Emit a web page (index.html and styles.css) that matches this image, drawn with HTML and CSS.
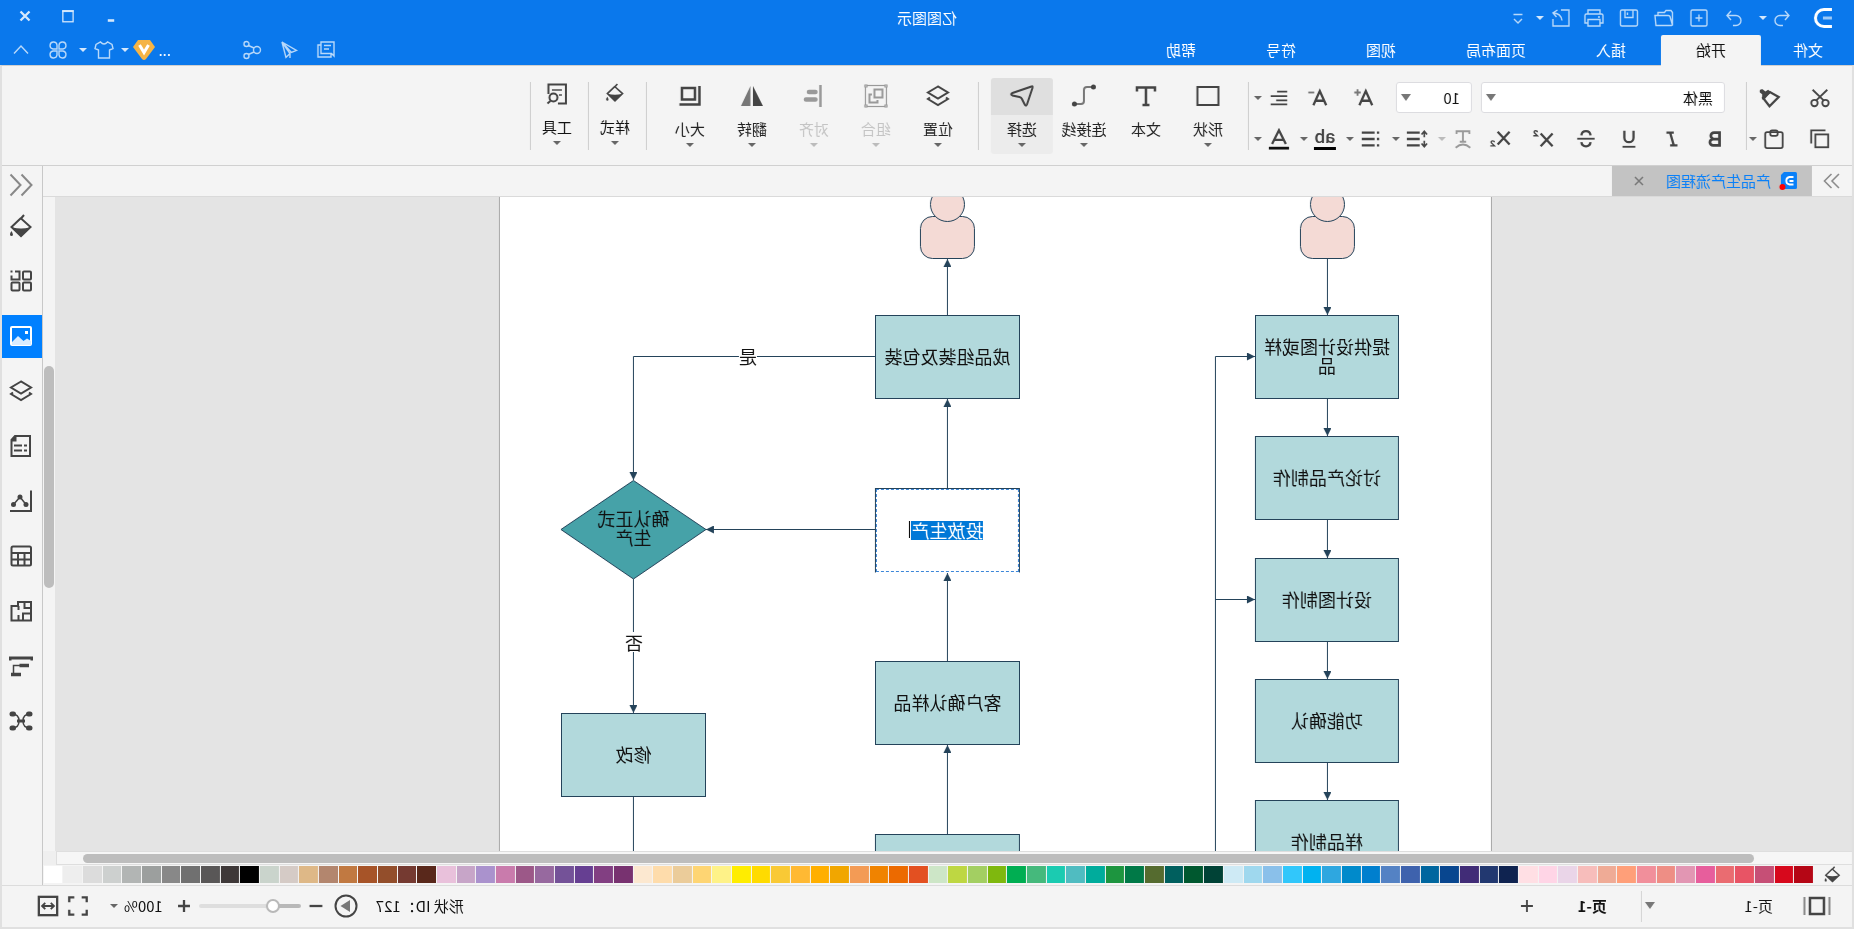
FILE: index.html
```html
<!DOCTYPE html>
<html lang="zh-CN">
<head>
<meta charset="utf-8">
<title>亿图图示</title>
<link rel="stylesheet" href="styles.css">
</head>
<body>
<svg class="defs" aria-hidden="true">
  <symbol id="i-layers" viewBox="0 0 24 24"><path d="M12 2.500 22 8.500 12 14.500 2 8.500Z"/><path d="M4 13.500 2 15 12 21 22 15 20 13.500"/></symbol>
  <symbol id="i-bucket" viewBox="0 0 24 24"><path d="M9 1 12 4.500 2.500 13 12 22 21.500 13 12 4"/><path class="solid" d="M3.500 13.500Q12 15.500 20.500 13.500L12 22.500Z"/><path class="solid" d="M21.500 17q2 2.500 1.500 4a1.600 1.600 0 0 1-3 0q0-1.500 1.500-4z"/></symbol>
</svg>
<div class="app">
  <header class="header">
    <div class="titlebar">
      <div class="quick">
        <svg class="logo" viewBox="0 0 18 20"><path d="M0 1.500H8A8.500 8.500 0 0 1 8 18.500H0" fill="none" stroke="#fff" stroke-width="3"/><path d="M0 10H9" stroke="#9cc9f7" stroke-width="3"/></svg>
        <button class="qb q-undo" aria-label="撤销"><svg viewBox="0 0 20 20"><path d="M7 3 3 7.500 7 12M3 7.500H12A5 5 0 0 1 12 17.500H9"/></svg></button>
        <button class="qc" aria-label="撤销列表"><i class="caret"></i></button>
        <button class="qb" aria-label="重做"><svg viewBox="0 0 20 20"><path d="M13 3 17 7.500 13 12M17 7.500H8A5 5 0 0 0 8 17.500H11"/></svg></button>
        <button class="qb" aria-label="新建"><svg viewBox="0 0 20 20"><rect x="2" y="2" width="16" height="16" rx="1.500"/><path d="M10 6.500V13.500M6.500 10H13.500"/></svg></button>
        <button class="qb" aria-label="打开"><svg viewBox="0 0 20 20"><path d="M1.500 17V4.500L3 2.500H8L9.500 4.500H16V7M1.500 17 4 8.500Q4.300 7.500 5.500 7.500H19L18 17.500H2.500Z"/></svg></button>
        <button class="qb" aria-label="保存"><svg viewBox="0 0 20 20"><rect x="1.500" y="2" width="17" height="16" rx="1.500"/><path d="M6 2V9.500H14V2M11.500 4.500V7"/></svg></button>
        <button class="qb" aria-label="打印"><svg viewBox="0 0 20 20"><path d="M4 6V2H16V6M4 15H1V7.500Q1 6 2.500 6H17.500Q19 6 19 7.500V15H16M4 11.500H16V18H4ZM4 9H6"/></svg></button>
        <button class="qb q-export" aria-label="导出"><svg viewBox="0 0 20 20"><path d="M10 2H2V18H18V11M13.500 2 18 5 14.500 9M18 5Q10 5 9 12.500"/></svg></button>
        <button class="qc" aria-label="导出选项"><i class="caret"></i></button>
        <button class="qb q-more" aria-label="自定义"><svg viewBox="0 0 20 20"><path d="M5.500 6.500H14.500M6 11 10 15 14 11"/></svg></button>
      </div>
      <h1 class="title">亿图图示</h1>
      <div class="winbtns">
        <button aria-label="最小化"><svg viewBox="0 0 14 14"><path d="M4.500 10.500H9.500" stroke-width="2"/></svg></button>
        <button aria-label="最大化"><svg viewBox="0 0 14 14"><rect x="3" y="3" width="8" height="8.500" stroke-width="1"/><path d="M2.500 3.200H11.500" stroke-width="1.500"/></svg></button>
        <button aria-label="关闭"><svg viewBox="0 0 14 14"><path d="M3.500 3.500 10.500 10.500M10.500 3.500 3.500 10.500" stroke-width="1.800"/></svg></button>
      </div>
    </div>
    <div class="menubar">
      <nav class="menus">
        <button class="menu m-file">文件</button><button class="menu active">开始</button><button class="menu">插入</button><button class="menu">页面布局</button><button class="menu">视图</button><button class="menu">符号</button><button class="menu">帮助</button>
      </nav>
      <div class="account">
        <button class="ab" aria-label="批注"><svg viewBox="0 0 20 20"><path d="M15 2H2V16L4.500 13.500H15ZM5 5.500H12M7 9H12M15 5H18V17H5V14"/></svg></button>
        <button class="ab" aria-label="发送"><svg viewBox="0 0 20 20"><path d="M17 2 2.500 10.500 7.500 12.500 17 2 13 17.500 9 13.500V18M17 2 9 13.500"/></svg></button>
        <button class="ab" aria-label="分享"><svg viewBox="0 0 20 20"><circle cx="5" cy="10" r="3.500"/><circle cx="15.500" cy="4" r="2.500"/><circle cx="15.500" cy="16" r="2.500"/><path d="M8 8 13.500 5.500M8 12 13.500 14.500"/></svg></button>
        <span class="user">...</span>
        <button class="vip" aria-label="会员"><svg viewBox="0 0 22 20"><path d="M5 0H17L22 7 13 19Q11 21 9 19L0 7Z" fill="#f5b445"/><path d="M6.500 5 11 12.500 15.500 5" fill="none" stroke="#fff" stroke-width="3"/></svg></button>
        <button class="ac" aria-label="会员选项"><i class="caret"></i></button>
        <button class="ab small" aria-label="皮肤"><svg viewBox="0 0 20 20"><path d="M6.500 2Q10 6 13.500 2L18 4.500 19 8.500 15.500 10V18H4.500V10L1 8.500 2 4.500Z"/></svg></button>
        <button class="ac" aria-label="皮肤选项"><i class="caret"></i></button>
        <button class="ab" aria-label="应用"><svg viewBox="0 0 20 20"><path d="M9 9H5A3.500 3.500 0 1 1 9 5ZM11 9H15A3.500 3.500 0 1 0 11 5ZM9 11H5A3.500 3.500 0 1 0 9 15ZM11 11H15A3.500 3.500 0 1 1 11 15Z"/></svg></button>
        <button class="ab" aria-label="收起功能区"><svg viewBox="0 0 20 20"><path d="M3 13.500 10 6 17 13.500"/></svg></button>
      </div>
    </div>
  </header>

  <div class="frame">
    <section class="ribbon">
      <div class="group g-clip">
        <div class="row">
          <button class="tb" aria-label="剪切"><svg viewBox="0 0 24 24"><circle cx="6" cy="17.500" r="3.500"/><circle cx="18" cy="17.500" r="3.500"/><path d="M4 3 16 14.500M20 3 8 14.500"/></svg></button>
          <button class="tb brush" aria-label="格式刷"><svg viewBox="0 0 24 24"><path d="M2.500 11 12 5.500 19.500 12 12.500 21Z" stroke-width="2.500"/><path class="solid" d="M11 5.500 14 3 17 5 20 2.500Q24 2 23 6L20.500 8V13.500L18 13.500Z"/></svg></button>
        </div>
        <div class="row">
          <button class="tb" aria-label="复制"><svg viewBox="0 0 24 24"><rect x="3" y="7" width="14" height="14"/><path d="M6 2.500H21.500V17"/></svg></button>
          <button class="sb" aria-label="粘贴"><svg viewBox="0 0 24 24"><rect x="2.500" y="4.500" width="19" height="17.500" rx="2"/><rect x="8" y="2.500" width="8" height="6" rx="2"/></svg><i class="caret"></i></button>
        </div>
      </div>
      <i class="divider"></i>
      <div class="group g-font">
        <div class="row">
          <label class="combo c-font"><select aria-label="字体"><option>黑体</option></select></label>
          <label class="combo c-size"><select aria-label="字号"><option>10</option></select></label>
          <button class="tb wide" aria-label="增大字号"><svg viewBox="0 0 24 24"><path d="M3 20 10 4.500 17 20M5.500 15H14.500" stroke-width="2.500"/><path d="M15.500 6H22.500M19 2.500V9.500" stroke="#777"/></svg></button>
          <button class="tb wide" aria-label="减小字号"><svg viewBox="0 0 24 24"><path d="M3 20 10 4.500 17 20M5.500 15H14.500" stroke-width="2.500"/><path d="M16 6H22.500" stroke="#777"/></svg></button>
          <button class="sb" aria-label="对齐方式"><svg viewBox="0 0 24 24"><path d="M3 5H14M3 10H21M3 14.500H15M3 19H21"/></svg><i class="caret"></i></button>
        </div>
        <div class="row">
          <button class="tb b43" aria-label="加粗"><svg viewBox="0 0 24 24"><path d="M7 5H13A3.500 3.500 0 0 1 13 12H7ZM7 12H14A3.500 3.500 0 0 1 14 19H7Z" stroke-width="3"/></svg></button>
          <button class="tb b43" aria-label="倾斜"><svg viewBox="0 0 24 24"><path d="M10 5H18M6 19H14M14 5 10 19" stroke-width="2.500"/></svg></button>
          <button class="tb b43" aria-label="下划线"><svg viewBox="0 0 24 24"><path d="M7 3V10.500A5 5 0 0 0 17 10.500V3" stroke-width="2.500"/><path d="M5 20.500H19"/></svg></button>
          <button class="tb b43" aria-label="删除线"><svg viewBox="0 0 24 24"><path d="M17 8Q16.500 3.500 12 3.500T7 8M7 15.500Q7.500 20 12 20T17 15.500" stroke-width="2.500"/><path d="M2.500 11.700H21.500"/></svg></button>
          <button class="tb b43" aria-label="上标"><svg viewBox="0 0 24 24"><path d="M1.500 6 14.500 20M14.500 6 1.500 20" stroke-width="2.500"/><path d="M18 4.500Q18 3 20 3T21.500 5L18 8.500H22.500" stroke-width="1.500"/></svg></button>
          <button class="tb b43" aria-label="下标"><svg viewBox="0 0 24 24"><path d="M1.500 4 14.500 18M14.500 4 1.500 18" stroke-width="2.500"/><path d="M18 15.500Q18 14 20 14T21.500 16L18 19.500H22.500" stroke-width="1.500"/></svg></button>
          <button class="sb dim" aria-label="文字路径"><svg viewBox="0 0 24 24"><path d="M5 6.500V3.500H19V6.500M12 3.500V14.500M8.500 15H15.500M4 21.500Q12 14.500 20 21.500"/></svg><i class="caret"></i></button>
          <button class="sb" aria-label="行距"><svg viewBox="0 0 24 24"><path d="M9 5H23M9 12H23M9 19H23" stroke-width="2.500"/><path d="M4 3.500V10M4 14V20.500M1 7 4 3.500 7 7M1 17 4 20.500 7 17" stroke-width="1.800"/></svg><i class="caret"></i></button>
          <button class="sb" aria-label="项目符号"><svg viewBox="0 0 24 24"><path d="M8 5H22M8 12H22M8 19H22M3 5H5.500M3 12H5.500M3 19H5.500" stroke-width="2.500"/></svg><i class="caret"></i></button>
          <button class="sb letters" aria-label="突出显示"><b>ab</b><i class="caret"></i></button>
          <button class="sb" aria-label="字体颜色"><svg viewBox="0 0 24 24"><path d="M4.500 17.500 12 2.500 19.500 17.500M7 13H17" stroke-width="2.500"/><path d="M1 22H23" stroke="#111" stroke-width="3"/></svg><i class="caret"></i></button>
        </div>
      </div>
      <i class="divider"></i>
      <div class="group g-tools">
        <button class="big"><svg viewBox="0 0 24 24"><rect x="1.500" y="3" width="21" height="18"/></svg><span>形状</span><i class="caret"></i></button>
        <button class="big"><svg viewBox="0 0 24 24"><path d="M3 7.500V3.500H21V7.500M12 3.500V20.500M8.500 21H15.500" stroke-width="2.500"/></svg><span>文本</span></button>
        <button class="big"><svg viewBox="0 0 24 24"><path d="M3 3H9Q12 3 12 6V17Q12 20 15 20H21" stroke="#777"/><circle class="solid" cx="2.500" cy="3" r="2.500"/><circle class="solid" cx="21.500" cy="20" r="2.500"/></svg><span>连接线</span><i class="caret"></i></button>
        <button class="big on"><svg viewBox="0 0 24 24"><path d="M2.500 2.500Q1 1.500 1.500 4L7 20.500Q8 23 9.500 20L12 15Q12.500 13.500 14.500 13L21.500 11.500Q24 10 21.500 9Z"/></svg><span>选择</span><i class="caret"></i></button>
      </div>
      <i class="divider"></i>
      <div class="group g-arrange">
        <button class="big"><svg viewBox="0 0 24 24"><use href="#i-layers"/></svg><span>位置</span><i class="caret"></i></button>
        <button class="big dim"><svg viewBox="0 0 24 24"><rect x="1.500" y="1.500" width="21" height="21" stroke-width="1.200"/><rect x="5.500" y="5.500" width="8" height="8"/><path d="M10.500 16V18.500H18.500V10.500H16"/><path d="M1 1H3V3H1ZM21 1H23V3H21ZM1 21H3V23H1ZM21 21H23V23H21Z" stroke-width="1.200" fill="#fff"/></svg><span>组合</span><i class="caret"></i></button>
        <button class="big dim"><svg viewBox="0 0 24 24"><path d="M5.500 1V23" stroke-width="2.500"/><path d="M10.500 8H17M10.500 15.500H20" stroke-width="4.500" stroke-linecap="round"/></svg><span>对齐</span><i class="caret"></i></button>
        <button class="big"><svg viewBox="0 0 24 24"><path d="M11 2V22H1Z" class="solid"/><path d="M13.500 2V22H23Z" fill="#777" stroke="none"/></svg><span>翻转</span><i class="caret"></i></button>
        <button class="big"><svg viewBox="0 0 24 24"><rect x="7" y="4" width="13" height="11.500" stroke-width="2.500"/><path d="M2.500 2V20.500H22.500" stroke-width="2.500"/></svg><span>大小</span><i class="caret"></i></button>
      </div>
      <i class="divider"></i>
      <div class="group g-one">
        <button class="big thin"><svg class="tight" viewBox="-3 0 30 27"><use href="#i-bucket" width="24" height="24"/></svg><span>样式</span><i class="caret"></i></button>
      </div>
      <i class="divider"></i>
      <div class="group g-one">
        <button class="big thin"><svg viewBox="0 0 24 24"><path d="M11 21.500H3V2.500H20.500V12"/><path d="M7 8H17M7 13H10" stroke="#777"/><circle cx="15.500" cy="15.500" r="4"/><path d="M18.500 19 21.500 21.500"/></svg><span>工具</span><i class="caret"></i></button>
      </div>
      <i class="divider"></i>
    </section>

    <div class="body">
      <main class="work">
        <div class="doctabs">
          <button class="expand" aria-label="展开左侧栏"><svg viewBox="0 0 20 20"><path d="M3 3 10 10 3 17M10.500 3 17.500 10 10.500 17"/></svg></button>
          <div class="doctab">
            <svg class="docicon" viewBox="0 0 18 18"><path d="M1.500 0H13L16 3V15.500Q16 17 14.500 17H1.500Q0 17 0 15.500V1.500Q0 0 1.500 0Z" fill="#0a80f8"/><path d="M3.500 5H7.500A3.800 3.800 0 0 1 7.500 12.500H3.500M3.500 9H7.500" fill="none" stroke="#fff" stroke-width="1.800"/><circle cx="14.500" cy="15" r="3" fill="#f00"/></svg>
            <a href="#doc">产品生产流程图</a>
            <button aria-label="关闭标签"><svg viewBox="0 0 12 12"><path d="M2 2 10 10M10 2 2 10"/></svg></button>
          </div>
        </div>
        <div class="stage">
          <div class="canvas">
            <div class="sheet">
              <svg class="links" viewBox="0 0 992 656" width="992" height="656">
                <defs><marker id="arrow" viewBox="0 0 8 8" refX="8" refY="4" markerWidth="8" markerHeight="8" markerUnits="userSpaceOnUse" orient="auto"><path class="tip" d="M0 0 8 4 0 8Z"/></marker></defs>
                <g class="people">
                  <rect x="136.500" y="19.500" width="54" height="42" rx="12"/><circle cx="163.500" cy="7.500" r="17"/>
                  <rect x="516.500" y="19.500" width="54" height="42" rx="12"/><circle cx="543.500" cy="7.500" r="17"/>
                </g>
                <g class="wires">
                  <path class="end" d="M163.500 62V118"/><path class="end" d="M163.500 202V239"/><path class="end" d="M163.500 323V361"/><path class="end" d="M163.500 445V482"/><path class="end" d="M163.500 566V603"/>
                  <path class="end" d="M275.500 656V159.500H236"/><path class="end" d="M275.500 402.500H236"/>
                  <path class="end" d="M543.500 118V62"/><path class="end" d="M543.500 291V202"/><path class="end" d="M543.500 464V376"/><path class="end" d="M543.500 637V548"/>
                  <path class="end" d="M616 159.500H857.500V283"/><path class="end" d="M616 332.500H785"/>
                  <path class="end" d="M857.500 382V516"/><path d="M857.500 600V656"/>
                </g>
                <path class="rhomb" d="M785 332.500 857.500 283.500 930 332.500 857.500 382Z"/>
              </svg>
              <div class="node n-design">提供设计图或样品</div>
              <div class="node n-discuss">讨论产品制作</div>
              <div class="node n-draw">设计图制作</div>
              <div class="node n-func">功能确认</div>
              <div class="node n-sample">样品制作</div>
              <div class="node n-pack">成品组装及包装</div>
              <div class="node n-edit"><span class="sel">投放生产</span></div>
              <div class="node n-client">客户确认样品</div>
              <div class="node n-next"></div>
              <div class="node n-fix">修改</div>
              <div class="node n-check">确认正式生产</div>
              <span class="tag t-yes">是</span>
              <span class="tag t-no">否</span>
            </div>
          </div>
          <div class="vscroll"><div class="vthumb"></div></div>
        </div>
        <div class="hscroll"><div class="htrack"><div class="hthumb"></div></div></div>
        <div class="palette">
          <button class="pfill" aria-label="填充"><svg viewBox="0 0 24 24"><use href="#i-bucket"/></svg></button>
          <div class="swatches" id="swatches"></div>
        </div>
      </main>
      <aside class="sidebar">
        <button class="collapse" aria-label="展开右侧栏"><svg viewBox="0 0 24 24"><path d="M11.500 1.500 1.500 12 11.500 22.500M22.500 1.500 12.500 12 22.500 22.500"/></svg></button>
        <nav>
          <button aria-label="样式"><svg viewBox="0 0 24 24"><use href="#i-bucket"/></svg></button>
          <button aria-label="符号"><svg viewBox="0 0 24 24"><rect x="2" y="2.500" width="8" height="8" rx="1"/><rect x="2" y="13.500" width="8" height="8" rx="1"/><rect x="13.500" y="13.500" width="8" height="8" rx="1"/><path d="M18 2.500H13.500V10.500H21.500V6.500M20.500 2.500H22.500"/></svg></button>
          <button class="on" aria-label="图片"><svg viewBox="0 0 24 24"><rect x="2" y="3" width="20" height="18" rx="1"/><path class="hill" d="M2 20V17L6 14.500 9.500 17 15 12 21 18V21H2Z"/><rect class="sun" x="5" y="7" width="3" height="3"/></svg></button>
          <button aria-label="图层"><svg viewBox="0 0 24 24"><use href="#i-layers"/></svg></button>
          <button aria-label="文档"><svg viewBox="0 0 24 24"><path d="M3 2H18L21.500 6V22H3Z"/><path class="solid" d="M16.500 2H18L21.500 6V7.500H16.500Z"/><path d="M6 11.500H9M11 11.500H19M6 16.500H9M11 16.500H19"/></svg></button>
          <button aria-label="图表"><svg viewBox="0 0 24 24"><path d="M2 1.500V22H23"/><path d="M7 15.500 13 8 19.500 15.500" stroke-width="1.500"/><circle class="solid" cx="7" cy="15.500" r="2.500"/><circle class="solid" cx="13" cy="8" r="2.500"/><circle class="solid" cx="19.500" cy="15.500" r="2.500"/></svg></button>
          <button aria-label="表格"><svg viewBox="0 0 24 24"><rect x="2" y="2.500" width="19.500" height="19" rx="1.500"/><path d="M2 9H21.500M2 15.500H21.500M8.500 9V21M15 9V21"/></svg></button>
          <button aria-label="平面图"><svg viewBox="0 0 24 24"><path d="M2 3H15V7H21.500V21.500H2ZM2 9H8.500V3M2 14.500H10V21M14.500 7V11M14.500 16V21"/></svg></button>
          <button aria-label="甘特图"><svg viewBox="0 0 24 24"><path d="M1 6.500V4H23V6.500" stroke-width="3"/><path d="M4 11.500H13.500M12 20.500H22" stroke-width="3.500"/><path d="M13 11.500H19.500V19" stroke-width="1.500"/></svg></button>
          <button aria-label="思维导图"><svg viewBox="0 0 24 24"><path d="M3 5Q10 5 10 12T3 19M21 5Q14 5 14 12T21 19" stroke-width="1.500"/><path d="M3 5H4.500M3 19H4.500M19.500 5H21M19.500 19H21" stroke-width="5" stroke-linecap="round"/><path d="M8 12H16" stroke-width="3"/></svg></button>
        </nav>
      </aside>
    </div>

    <footer class="status">
      <button class="st pages" aria-label="页面缩略图"><svg viewBox="0 0 28 24"><rect x="7" y="4" width="14" height="16" stroke-width="2.500"/><path d="M1.500 3V21M26.500 3V21" stroke="#888" stroke-width="2"/></svg></button>
      <label class="combo c-page"><select aria-label="页面"><option>页-1</option></select></label>
      <button class="pagetab">页-1</button>
      <button class="st add" aria-label="新建页"><svg viewBox="0 0 24 24"><path d="M12 5.500V18.500M5.500 12H18.500" stroke-width="2"/></svg></button>
      <span class="shape">形状 ID：127</span>
      <button class="st play" aria-label="演示"><svg viewBox="0 0 24 24"><circle cx="12" cy="12" r="10.500"/><path d="M8 6 17.500 12 8 18Z" fill="#777" stroke="none"/></svg></button>
      <button class="st minus" aria-label="缩小"><svg viewBox="0 0 24 24"><path d="M5 12H19" stroke-width="2.500"/></svg></button>
      <input class="zoom" type="range" min="0" max="100" value="24" aria-label="缩放">
      <button class="st plus" aria-label="放大"><svg viewBox="0 0 24 24"><path d="M12 5.500V18.500M5.500 12H18.500" stroke-width="2.500"/></svg></button>
      <button class="pct">100%<i class="caret"></i></button>
      <button class="st full" aria-label="全屏"><svg viewBox="0 0 24 24"><path d="M2.500 8V2.500H8M16 2.500H21.500V8M21.500 16V21.500H16M8 21.500H2.500V16" stroke-width="2.500"/></svg></button>
      <button class="st fit" aria-label="适合宽度"><svg viewBox="0 0 24 24"><rect x="2" y="2" width="20" height="20" stroke-width="2.500"/><path d="M6 12H18M9 8.500 5.500 12 9 15.500M15 8.500 18.500 12 15 15.500"/></svg></button>
    </footer>
  </div>
</div>
<script src="script.js"></script>
</body>
</html>
```
FILE: styles.css
```css
* { box-sizing: border-box; }
html, body { height: 100%; }
body {
  margin: 0;
  overflow: hidden;
  background: #f4f4f4;
  color: #222;
  font: 15px/20px "Noto Sans CJK SC", "Noto Sans", sans-serif;
}
button {
  display: flex;
  align-items: center;
  justify-content: center;
  margin: 0;
  padding: 0;
  border: 0;
  background: none;
  color: inherit;
  font: inherit;
  white-space: nowrap;
}
svg { display: block; flex: none; fill: none; stroke: #444; stroke-width: 2; }
.solid { fill: #444; stroke: none; }
.defs { position: absolute; width: 0; height: 0; }
.caret {
  flex: none;
  width: 0;
  height: 0;
  border: 4px solid transparent;
  border-top-color: #666;
  border-bottom: 0;
}

/* The interface is shown as a mirror image */
.app { display: flex; flex-direction: column; height: 100vh; transform: scaleX(-1); }

/* Header */
.header { position: relative; z-index: 1; flex: none; background: #0a78ec; color: #fff; }
.header svg { width: 20px; height: 20px; stroke: #b9d9fa; stroke-width: 1.400; }
.header .caret { border-top-color: #d5e8fc; }
.titlebar { display: grid; grid-template-columns: 1fr auto 1fr; align-items: center; height: 35px; }
.quick { display: flex; align-items: center; padding-left: 22px; }
.quick .logo { width: 18px; height: 20px; }
.qb { width: 35px; height: 30px; }
.q-undo { width: 28px; margin-left: 18px; }
.qc { width: 10px; height: 30px; }
.qc + .qb { margin-left: 6px; }
.q-export { width: 32px; }
.q-more.q-more { width: 22px; }
.title { margin: 0; font-size: 15px; font-weight: 400; line-height: 20px; }
.winbtns { display: flex; justify-content: flex-end; padding: 0 4px 3px 0; }
.winbtns button { width: 43px; height: 28px; }
.winbtns svg { width: 18px; height: 18px; stroke: #d5e8fc; }
.menubar { display: flex; justify-content: space-between; height: 30px; }
.menus { display: flex; margin-bottom: -1px; }
.menu { padding: 0 35px 1px; }
.m-file { padding: 0 32px 1px 31px; }
.menu.active { background: #f4f4f4; color: #111; border-radius: 2px 2px 0 0; }
.account { display: flex; align-items: center; padding-right: 3px; }
.ab { width: 37px; height: 28px; }
.ab.small { width: 30px; }
.user { width: 77px; padding-left: 63px; }
.vip { width: 26px; height: 28px; }
.header .vip svg { width: 22px; stroke: none; }
.ac { width: 12px; height: 28px; }

/* Frame */
.frame {
  flex: 1;
  min-height: 0;
  display: flex;
  flex-direction: column;
  border: 2px solid #e0e0e0;
  border-top: 1px solid #d0d0d0;
}

/* Ribbon */
.ribbon { flex: none; display: flex; height: 100px; padding: 12px 0 0 10px; border-bottom: 1px solid #d0d0d0; }
.group { display: flex; flex: none; }
.g-clip, .g-font { flex-direction: column; gap: 7px; padding-top: 3px; }
.g-clip { width: 95px; }
.g-clip .brush { margin-left: 6px; }
.g-clip .sb { width: 43px; margin-left: 8px; }
.g-tools { padding-right: 12px; }
.g-arrange { padding-right: 12px; }
.g-one { padding-right: 4px; }
.divider { flex: none; width: 1px; height: 68px; margin: 4px 9px 0 0; background: #cdcdcd; }
.row { display: flex; align-items: center; height: 33px; }
.ribbon .row + .row { height: 36px; }
.tb { width: 44px; height: 32px; }
.tb.b43 { width: 43px; }
.tb.wide { width: 46px; }
.tb svg, .sb svg { width: 22px; height: 22px; }
.sb { width: 46px; height: 32px; justify-content: flex-start; gap: 6px; padding-left: 5px; }
.sb b { width: 22px; height: 22px; border-bottom: 3px solid #000; color: #444; font: 500 19px/18px Roboto, sans-serif; }
.combo { position: relative; display: block; height: 31px; border: 1px solid #dcdce0; border-radius: 3px; background: #fff; }
.combo select { width: 100%; height: 100%; padding: 0 11px; border: 0; background: none; appearance: none; color: #111; font: inherit; }
.combo::after { content: ""; position: absolute; right: 4px; top: 11px; border: 5px solid transparent; border-top: 7px solid #777; border-bottom: 0; }
.c-font { width: 244px; margin: 0 9px 0 12px; }
.c-size { width: 76px; margin-right: 9px; }
.big { flex-direction: column; justify-content: flex-start; gap: 4px; width: 62px; height: 76px; padding-top: 6px; border-radius: 3px; }
.big svg { width: 24px; height: 24px; margin-bottom: 7px; }
.big.on { background: linear-gradient(#dfdfdf 37px, #ececec 37px); }
.big.thin { width: 44px; padding-top: 4px; color: #111; }
.dim { color: #c4c4c4; }
.dim svg { stroke: #999; }
.dim .caret { border-top-color: #bbb; }

/* Work area */
.body { flex: 1; min-height: 0; display: flex; }
.work { flex: 1; min-width: 0; display: flex; flex-direction: column; }
.doctabs { flex: none; display: flex; height: 31px; border-bottom: 1px solid #dadada; }
.expand { width: 40px; }
.expand svg { width: 20px; height: 20px; stroke: #888; stroke-width: 1.500; }
.doctab { display: flex; align-items: center; width: 200px; padding-left: 15px; background: #c3c3c3; }
.docicon { width: 18px; height: 18px; stroke: none; }
.doctab a { margin-left: 8px; color: #0a80f8; text-decoration: none; }
.doctab button { width: 20px; height: 20px; margin-left: 17px; }
.doctab button svg { width: 12px; height: 12px; stroke: #777; stroke-width: 1.500; }
.stage { flex: 1; min-height: 0; display: flex; }
.canvas { flex: 1; min-width: 0; overflow: hidden; background: #e4e4e4; }
.sheet { position: relative; width: 993px; height: 100%; margin-left: 360px; border: solid #a8a8a8; border-width: 0 1px; background: #fff; }
.links { position: absolute; left: 0; top: 0; stroke-width: 1; }
.people rect, .people circle { fill: #f4dad5; stroke: #24435a; }
.wires path { stroke: #24435a; }
.wires .end { marker-end: url(#arrow); }
.tip { fill: #24435a; stroke: none; }
.rhomb { fill: #46a2a8; stroke: #24435a; }
.node {
  position: absolute;
  display: flex;
  align-items: center;
  justify-content: center;
  width: 145px;
  height: 84px;
  padding: 0 8px 2px;
  border: 1px solid #24435a;
  background: #b2d9dc;
  color: #111;
  font-size: 18px;
  line-height: 19px;
  text-align: center;
}
.n-design, .n-discuss, .n-draw, .n-func, .n-sample { left: 92px; width: 144px; }
.n-pack, .n-edit, .n-client, .n-next { left: 471px; }
.n-design, .n-pack { top: 118px; }
.n-discuss { top: 239px; }
.n-draw { top: 361px; }
.n-func { top: 482px; }
.n-sample { top: 603px; }
.n-edit { top: 291px; height: 85px; padding-bottom: 0; border-bottom-color: #fff; background: #fff; outline: 1px dashed #3d87d9; outline-offset: -2px; }
.n-client { top: 464px; }
.n-next { top: 637px; }
.n-fix { left: 785px; top: 516px; }
.n-check { left: 785px; top: 290px; padding: 0 30px 2px; border: 0; background: none; }
.sel { position: relative; background: #0078d7; color: #fff; }
.sel::after { content: ""; position: absolute; top: 0; right: -2px; width: 1px; height: 17px; background: #000; }
.tag { position: absolute; background: #fff; color: #111; font-size: 18px; line-height: 20px; }
.t-yes { left: 734px; top: 149px; }
.t-no { left: 848px; top: 435px; }
.vscroll { flex: none; width: 12px; padding: 169px 1px 0; background: #f4f4f4; }
.vthumb { width: 10px; height: 222px; border-radius: 5px; background: #bdbdbd; }
.hscroll { flex: none; height: 14px; padding-right: 13px; background: #efefef; }
.htrack { height: 14px; padding: 2px 26px 0 98px; border: solid #dedede; border-width: 1px 1px 1px 0; background: #f6f6f6; }
.hthumb { height: 9px; border-radius: 5px; background: #bdbdbd; }
.palette { flex: none; display: flex; height: 20px; padding: 1px 1px 2px 0; }
.pfill { width: 39px; }
.pfill svg { width: 17px; height: 17px; }
.swatches { flex: 1; display: flex; gap: 1px; }
.swatches button { flex: 1; }

/* Sidebar */
.sidebar { flex: none; width: 41px; border-left: 1px solid #c8c8c8; }
.sidebar button { width: 40px; height: 43px; padding: 0 0 1px 1px; }
.sidebar svg { width: 24px; height: 24px; }
.sidebar .collapse { height: 39px; }
.collapse svg { stroke: #888; }
.sidebar nav { display: flex; flex-direction: column; gap: 12px; }
.sidebar .on { background: #0080ff; }
.sidebar .on svg { stroke: #fff; }
.on .hill { fill: #d9ecff; stroke: none; }
.on .sun { fill: #fff; stroke: none; }

/* Status bar */
.status { flex: none; display: flex; align-items: center; height: 42px; padding-bottom: 1px; border-top: 1px solid #dcdcdc; color: #111; }
.st { width: 30px; height: 30px; }
.st svg { width: 22px; height: 22px; }
.pages { margin-left: 20px; }
.pages svg { width: 28px; height: 24px; }
.c-page { width: 144px; margin-left: 17px; border: 0; border-right: 1px solid #d4d4d4; border-radius: 0; background: none; }
.c-page::after { right: 3px; }
.c-page select { padding: 0 10px 0 12px; }
.pagetab { margin-left: 34px; font-weight: 700; }
.add { margin-left: 36px; }
.shape { margin-left: auto; width: 103px; white-space: nowrap; }
.zoom { width: 102px; height: 16px; margin: 0; appearance: none; background: none; }
.zoom::-webkit-slider-runnable-track { height: 4px; border-radius: 2px; background: linear-gradient(90deg, #b8b8b8 27%, #dedede 27%); }
.zoom::-webkit-slider-thumb { appearance: none; width: 14px; height: 14px; margin-top: -5px; border: 2px solid #b8b8b8; border-radius: 50%; background: #fff; }
.play svg { width: 24px; height: 24px; }
.pct { gap: 6px; margin: 0 17px 0 6px; }
.fit { margin-right: 31px; }
```
FILE: script.js
```js
const colors = `b50615 d7081c c64f76 e85465 ea6c71 e75e9c e296b3 ee8e85 f18f9b ff9f79 efab96 f7bdbb ead5e8 ffd5e6 ffdfe4
0f2350 223870 412c77 08468f 00669f 3e62ad 5482c4 007fce 008acb 2ea7e0 00b2f0 31c7fb 8ac0ea 9fd8ee ceeaf5
004236 00582f 005f5e 556b2f 007947 1d953f 00ac9c 50bcc1 1bcbb1 45b97c 00ae52 7fb80e a3cf62 bed742 cde6c7
e35021 ec6a00 f08300 f39b55 f1a600 ffaf00 ffb933 f9c935 ffdb00 ffed00 fef288 fed573 ebcc9a fedcab fce8d0
783270 823f82 663f92 745298 97699f 9c5888 c97bac aa92cd c7a5c8 e9c1db 59281b 753a31 934e2b a75428 c17941
b3866e deb887 d5cbc6 cad4cc 000000 3e3838 595757 707070 888888 9c9f9e b2b5b4 cdd0cf dcdcdc eeeeee ffffff`.split(/\s+/);
const box = document.getElementById("swatches");
for (const c of colors) {
  const b = document.createElement("button");
  b.style.background = "#" + c;
  b.setAttribute("aria-label", "颜色 #" + c);
  box.append(b);
}
```
